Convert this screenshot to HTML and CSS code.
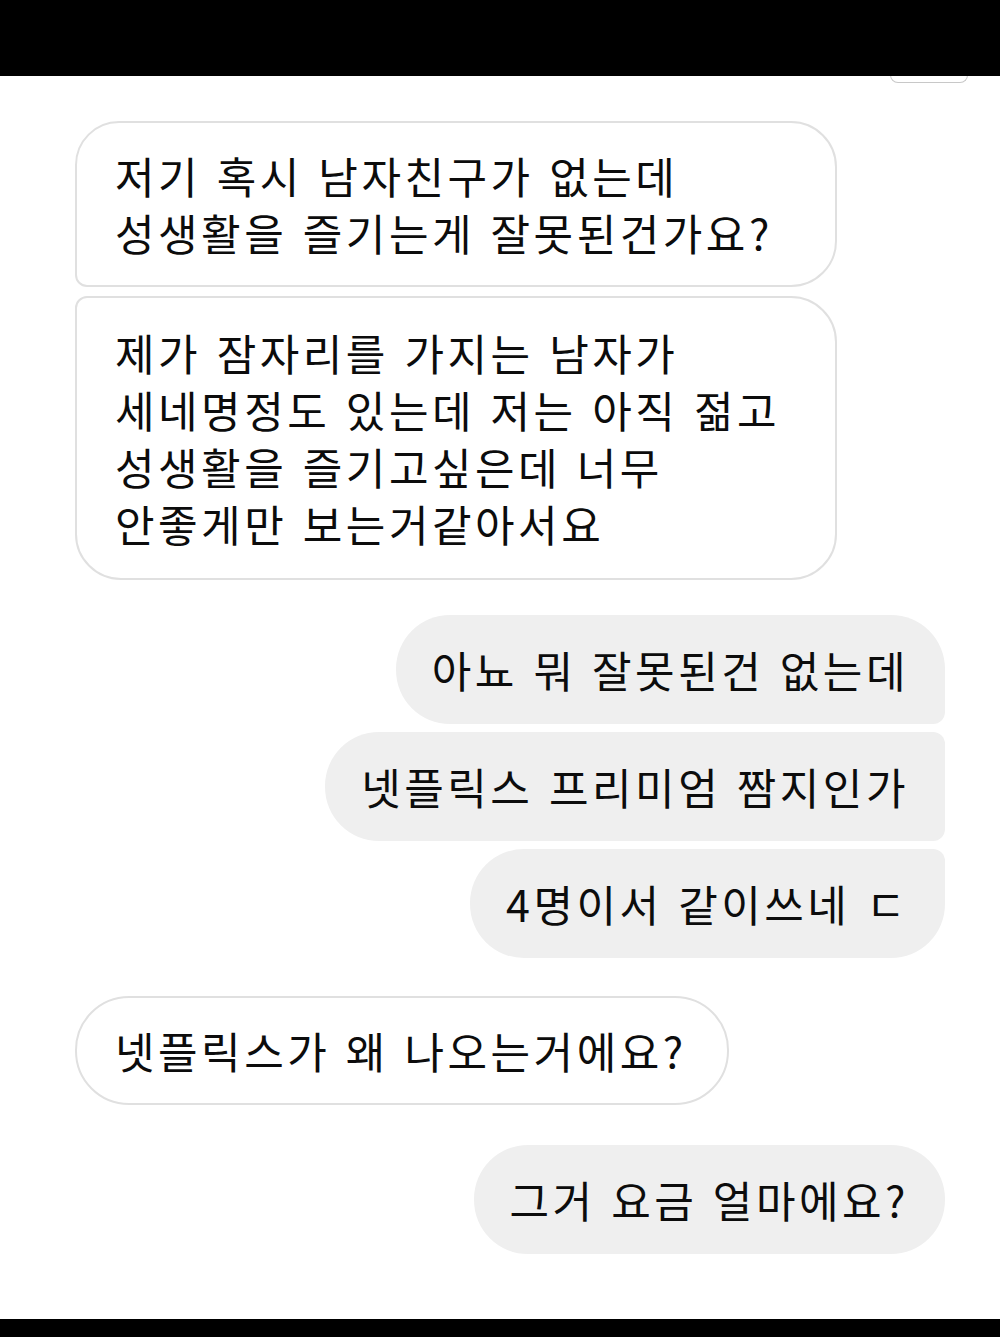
FILE: index.html
```html
<!DOCTYPE html>
<html lang="ko">
<head>
<meta charset="utf-8">
<link rel="stylesheet" href="styles.css">
</head>
<body>
<div class="topbar"></div>
<div class="tab-row"><div class="tab"></div></div>
<main class="chat">
  <div class="group recv">
    <div class="bubble r-first">저기 혹시 남자친구가 없는데<br>성생활을 즐기는게 잘못된건가요?</div>
    <div class="bubble r-last">제가 잠자리를 가지는 남자가<br>세네명정도 있는데 저는 아직 젊고<br>성생활을 즐기고싶은데 너무<br>안좋게만 보는거같아서요</div>
  </div>
  <div class="group sent">
    <div class="bubble s-first">아뇨 뭐 잘못된건 없는데</div>
    <div class="bubble s-mid">넷플릭스 프리미엄 짬지인가</div>
    <div class="bubble s-last">4명이서 같이쓰네 ㄷ</div>
  </div>
  <div class="group recv">
    <div class="bubble r-single">넷플릭스가 왜 나오는거에요?</div>
  </div>
  <div class="group sent">
    <div class="bubble s-single">그거 요금 얼마에요?</div>
  </div>
</main>
<div class="bottombar"></div>
</body>
</html>
```

FILE: styles.css
```css
html, body {
  margin: 0;
  padding: 0;
  background: #ffffff;
}
body {
  width: 1000px;
  height: 1337px;
  display: flex;
  flex-direction: column;
  font-family: "Noto Sans CJK KR", "Noto Sans", sans-serif;
  color: #0c0c0c;
  overflow: hidden;
}
.topbar {
  height: 76px;
  background: #000;
  position: relative;
  z-index: 2;
  flex: none;
}
.tab-row {
  height: 0;
  display: flex;
  justify-content: flex-end;
  padding-right: 32px;
}
.tab {
  width: 76px;
  height: 20px;
  margin-top: -14px;
  border: 1px solid #c8c8c8;
  border-top: none;
  border-radius: 0 0 8px 8px;
  background: #fff;
  position: relative;
  z-index: 1;
}
.chat {
  flex: 1;
  display: flex;
  flex-direction: column;
  gap: 35px;
  padding: 45px 55px 0 75px;
}
.group {
  display: flex;
  flex-direction: column;
  gap: 8px;
}
.group.recv { align-items: flex-start; }
.group.sent { align-items: flex-end; }
.recv .bubble + .bubble { margin-top: 1px; }
.bubble {
  font-size: 43px;
  font-weight: 400;
  line-height: 57px;
  letter-spacing: 3.5px;
  white-space: nowrap;
}
.recv .bubble {
  background: #fff;
  border: 2px solid #e0e0e0;
  padding: 24px 40px 24px 38px;
}
.sent .bubble {
  background: #efefef;
  padding: 26px 36px 26px 36px;
}
.r-first {
  width: 680px;
  border-radius: 44px 46px 46px 12px;
}
.r-last {
  width: 680px;
  padding-top: 26px !important;
  padding-bottom: 26px !important;
  border-radius: 12px 46px 46px 46px;
}
.r-single {
  border-radius: 54px;
  margin-top: 3px;
}
.s-first { border-radius: 54px 54px 12px 54px; }
.s-mid { border-radius: 54px 12px 12px 54px; }
.s-last { border-radius: 54px 12px 54px 54px; }
.s-single { border-radius: 54px; margin-top: 5px; }
.bottombar {
  height: 18px;
  background: #000;
  flex: none;
}
```
